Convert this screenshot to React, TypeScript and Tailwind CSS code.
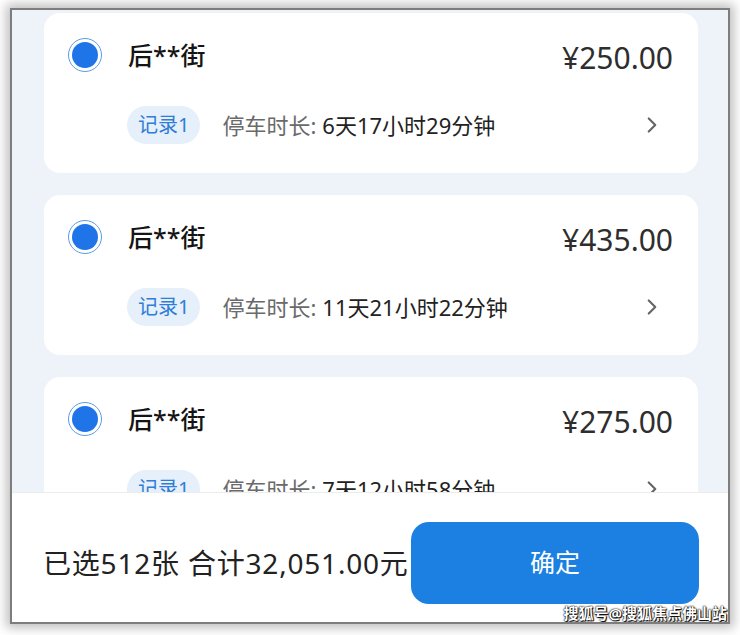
import React from 'react';
import { ChevronRight } from 'lucide-react';

const records = [
  { name: '后**街', price: '¥250.00', tag: '记录1', duration: '6天17小时29分钟' },
  { name: '后**街', price: '¥435.00', tag: '记录1', duration: '11天21小时22分钟' },
  { name: '后**街', price: '¥275.00', tag: '记录1', duration: '7天12小时58分钟' },
];

const font = "font-['Noto_Sans','Noto_Sans_CJK_SC',sans-serif]";

const Radio = () => (
  <div className="w-[34px] h-[34px] shrink-0 rounded-full border-[1.5px] border-[#5a9be9] p-[3px] bg-white">
    <div className="w-full h-full rounded-full bg-[#1f74e8]" />
  </div>
);

const RecordCard = ({ item }: { item: (typeof records)[number] }) => (
  <div className="shrink-0 h-[160px] bg-white rounded-[16px] pl-[24px] pr-[25px] pt-[25px] flex flex-col">
    <div className="flex items-center h-[34px]">
      <Radio />
      <span className="ml-[26px] text-[25px] font-medium text-[#151515] leading-none">{item.name}</span>
      <span className="ml-auto mt-[6px] text-[30px] text-[#2e2e2e] leading-none">{item.price}</span>
    </div>
    <div className="flex items-center mt-[34px] pl-[59px] h-[38px]">
      <span className="h-[38px] px-[11px] rounded-full bg-[#e5f0fb] text-[#2f7dd8] text-[20px] flex items-center">
        {item.tag}
      </span>
      <span className="ml-[22px] text-[22px] text-[#6a6a6a]">停车时长: </span>
      <span className="ml-[6px] text-[22px] text-[#222]">{item.duration}</span>
      <ChevronRight className="ml-auto mr-[8px] text-[#666]" size={26} strokeWidth={2} />
    </div>
  </div>
);

export default function App() {
  return (
    <div className={`w-[740px] h-[635px] bg-white pt-[8px] pb-[11px] px-[10px] flex ${font}`}>
      <div className="relative flex-1 flex flex-col border-2 border-[#7d7d7d] shadow-[0_0_10px_4px_rgba(0,0,0,0.25)] overflow-hidden">
        <div className="flex-1 min-h-0 overflow-hidden bg-[#eef2f9] pl-[32px] pr-[30px] pt-[3px] flex flex-col gap-[22px]">
          {records.map((r, i) => (
            <RecordCard key={i} item={r} />
          ))}
        </div>
        <div className="h-[130px] shrink-0 bg-white border-t border-[#ececec] pl-[31px] pr-[29px] pt-[10px] flex items-center justify-between">
          <span className="text-[28px] text-[#222] tracking-[0.8px] whitespace-nowrap">已选512张 合计32,051.00元</span>
          <button className="w-[288px] h-[82px] shrink-0 rounded-[18px] bg-[#1b80e1] text-white text-[25px]">确定</button>
        </div>
        <span className="absolute right-[1px] bottom-[0px] text-[15px] font-bold text-white leading-[18px] [text-shadow:0_0_2px_#000,0_0_1px_#000,1px_1px_1px_#000]">
          搜狐号@搜狐焦点佛山站
        </span>
      </div>
    </div>
  );
}
